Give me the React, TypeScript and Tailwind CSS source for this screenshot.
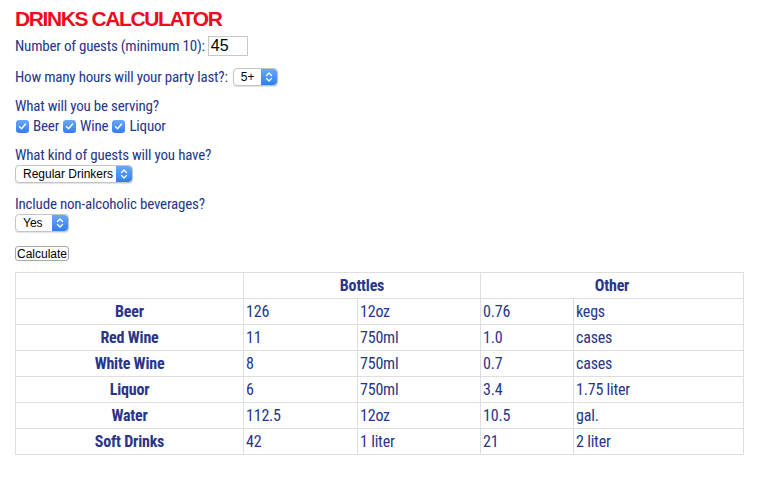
import React from "react";

type Row = {
  name: string;
  bottles: string;
  bottleSize: string;
  other: string;
  otherUnit: string;
};

const rows: Row[] = [
  { name: "Beer", bottles: "126", bottleSize: "12oz", other: "0.76", otherUnit: "kegs" },
  { name: "Red Wine", bottles: "11", bottleSize: "750ml", other: "1.0", otherUnit: "cases" },
  { name: "White Wine", bottles: "8", bottleSize: "750ml", other: "0.7", otherUnit: "cases" },
  { name: "Liquor", bottles: "6", bottleSize: "750ml", other: "3.4", otherUnit: "1.75 liter" },
  { name: "Water", bottles: "112.5", bottleSize: "12oz", other: "10.5", otherUnit: "gal." },
  { name: "Soft Drinks", bottles: "42", bottleSize: "1 liter", other: "21", otherUnit: "2 liter" },
];

const Stepper = () => (
  <span className="flex h-full w-[16px] items-center justify-center rounded-r-[4px] bg-gradient-to-b from-[#6aa8f7] to-[#2f7df0]">
    <svg width="8" height="12" viewBox="0 0 8 12" fill="none">
      <path d="M1.5 4.5 L4 2 L6.5 4.5" stroke="white" strokeWidth="1.3" strokeLinecap="round" strokeLinejoin="round" />
      <path d="M1.5 7.5 L4 10 L6.5 7.5" stroke="white" strokeWidth="1.3" strokeLinecap="round" strokeLinejoin="round" />
    </svg>
  </span>
);

const FakeSelect = ({ value, width }: { value: string; width: string }) => (
  <div
    className={`flex h-[18px] items-center justify-between rounded-[4px] border border-[#c4c4c4] bg-white shadow-[0_1px_1px_rgba(0,0,0,0.12)] ${width}`}
  >
    <span className="pl-[7px] font-['Liberation_Sans',sans-serif] text-[12px] leading-none tracking-normal text-black">
      {value}
    </span>
    <Stepper />
  </div>
);

const Check = ({ label }: { label: string }) => (
  <label className="flex items-center gap-[4px]">
    <span className="flex h-[13px] w-[13px] items-center justify-center rounded-[3px] bg-gradient-to-b from-[#6aa8f7] to-[#2f7df0]">
      <svg width="9" height="9" viewBox="0 0 9 9" fill="none">
        <path d="M1.5 4.8 L3.6 6.8 L7.5 2" stroke="white" strokeWidth="1.4" strokeLinecap="round" strokeLinejoin="round" />
      </svg>
    </span>
    <span>{label}</span>
  </label>
);

const App = () => {
  return (
    <div className="min-h-[497px] w-[758px] bg-white px-[15px] pt-[4px] font-['Roboto_Condensed','Liberation_Sans',sans-serif] text-[15px] tracking-[-0.2px] text-[#28358a]">
      <h1 className="h-[30px] font-['Liberation_Sans',sans-serif] text-[21px] font-bold leading-[30px] tracking-[-1.4px] text-[#ee0a1f]">
        DRINKS CALCULATOR
      </h1>

      <div className="flex h-[24px] items-center gap-[3px]">
        <span>Number of guests (minimum 10):</span>
        <div className="flex h-[20px] w-[40px] items-center border border-[#c8c8c8] pl-[2px] font-['Liberation_Sans',sans-serif] text-[16px] tracking-normal text-black">
          45
        </div>
      </div>

      <div className="mt-[8px] flex h-[22px] items-center gap-[5px]">
        <span>How many hours will your party last?:</span>
        <FakeSelect value="5+" width="w-[45px]" />
      </div>

      <div className="mt-[8px] flex h-[20px] items-center">What will you be serving?</div>
      <div className="flex h-[20px] items-center gap-[4px] pl-[1px]">
        <Check label="Beer" />
        <Check label="Wine" />
        <Check label="Liquor" />
      </div>

      <div className="mt-[9px] flex h-[20px] items-center">What kind of guests will you have?</div>
      <FakeSelect value="Regular Drinkers" width="w-[118px]" />

      <div className="mt-[11px] flex h-[20px] items-center">Include non-alcoholic beverages?</div>
      <FakeSelect value="Yes" width="w-[54px]" />

      <button className="mt-[14px] flex h-[15px] items-center rounded-[3px] border border-[#a8a8a8] bg-white px-[1px] font-['Liberation_Sans',sans-serif] text-[12px] leading-none tracking-normal text-black">
        Calculate
      </button>

      <table className="mt-[11px] w-[728px] table-fixed border-collapse text-[16px] tracking-[-0.2px]">
        <colgroup>
          <col className="w-[228px]" />
          <col className="w-[114px]" />
          <col className="w-[123px]" />
          <col className="w-[93px]" />
          <col className="w-[170px]" />
        </colgroup>
        <thead>
          <tr className="h-[26px]">
            <th className="border border-[#dedede]"></th>
            <th colSpan={2} className="border border-[#dedede] text-center font-bold">
              Bottles
            </th>
            <th colSpan={2} className="border border-[#dedede] text-center font-bold">
              Other
            </th>
          </tr>
        </thead>
        <tbody>
          {rows.map((row) => (
            <tr key={row.name} className="h-[26px]">
              <th className="border border-[#dedede] text-center font-bold">{row.name}</th>
              <td className="border border-[#dedede] px-[2px] text-left">{row.bottles}</td>
              <td className="border border-[#dedede] px-[2px] text-left">{row.bottleSize}</td>
              <td className="border border-[#dedede] px-[2px] text-left">{row.other}</td>
              <td className="border border-[#dedede] px-[2px] text-left">{row.otherUnit}</td>
            </tr>
          ))}
        </tbody>
      </table>
    </div>
  );
};

export default App;
